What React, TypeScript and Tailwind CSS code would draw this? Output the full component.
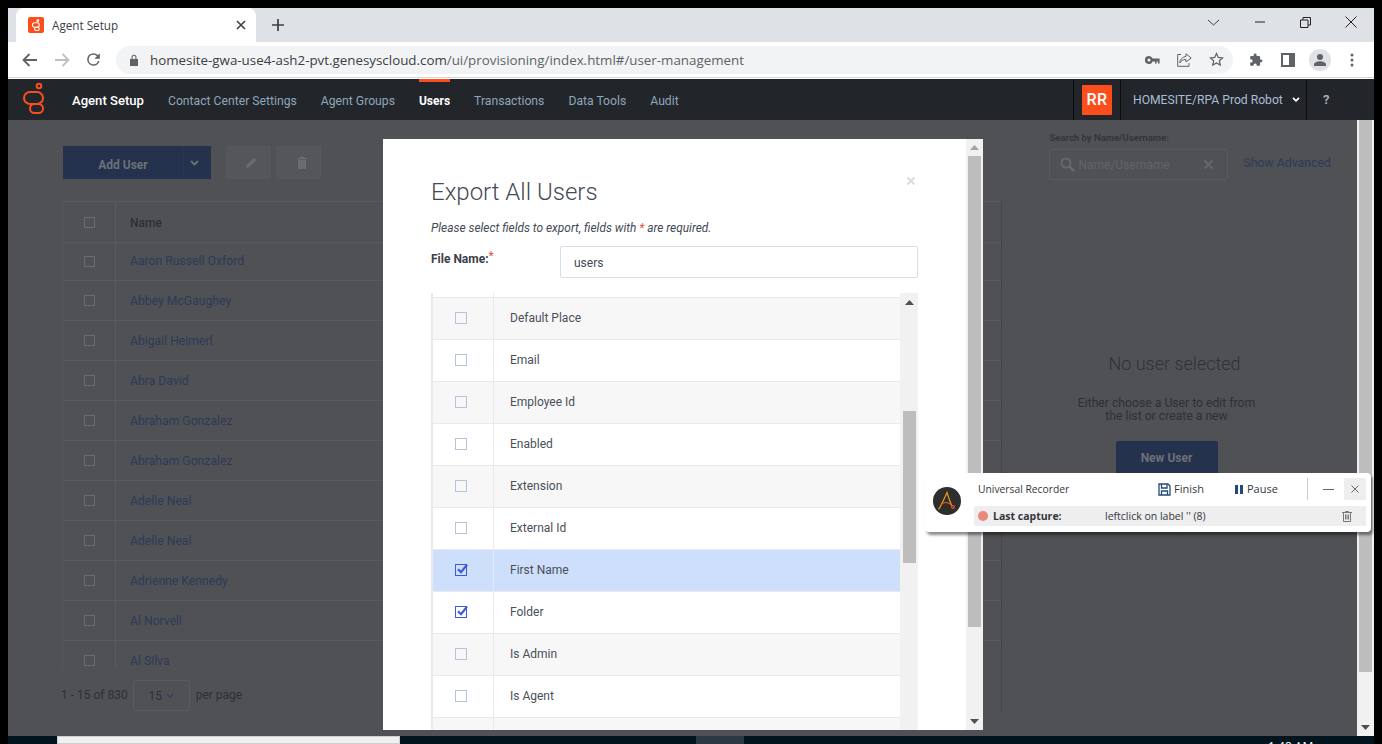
import React from "react";

const names = ["Aaron Russell Oxford","Abbey McGaughey","Abigail Heimerl","Abra David","Abraham Gonzalez","Abraham Gonzalez","Adelle Neal","Adelle Neal","Adrienne Kennedy","Al Norvell","Al Silva"];
const fields: { label: string; on?: boolean; bg: string }[] = [
  { label: "Default Place", bg: "bg-[#f7f7f7]" },
  { label: "Email", bg: "bg-white" },
  { label: "Employee Id", bg: "bg-[#f7f7f7]" },
  { label: "Enabled", bg: "bg-white" },
  { label: "Extension", bg: "bg-[#f7f7f7]" },
  { label: "External Id", bg: "bg-white" },
  { label: "First Name", on: true, bg: "bg-[#cddffb]" },
  { label: "Folder", on: true, bg: "bg-white" },
  { label: "Is Admin", bg: "bg-[#f7f7f7]" },
  { label: "Is Agent", bg: "bg-white" },
  { label: "", bg: "bg-[#f7f7f7]" },
];

const Tri = ({ up, color = "#505050" }: { up?: boolean; color?: string }) => (
  <svg width="9" height="5" viewBox="0 0 9 5"><path d={up ? "M4.5 0L9 5H0Z" : "M0 0H9L4.5 5Z"} fill={color} /></svg>
);

function Logo() {
  return (
    <svg width="22" height="32" viewBox="0 0 22 32" fill="none" stroke="#fc4e1c" strokeWidth="2" className="-mt-[3px]">
      <circle cx="16" cy="4" r="2.3" />
      <rect x="1" y="10" width="19" height="12" rx="6" />
      <rect x="7" y="22" width="13" height="9" rx="4.5" />
    </svg>
  );
}

function TabBar() {
  return (
    <div className="flex h-[34px] shrink-0 items-end bg-[#dee1e6]">
      <div className="ml-2 flex h-[34px] w-[240px] items-center rounded-t-lg bg-white pl-3 pr-[10px]">
        <span className="flex h-4 w-4 items-center justify-center rounded-[2px] bg-[#fc4e1c]">
          <svg width="8" height="12" viewBox="0 0 22 32" fill="none" stroke="#fff" strokeWidth="3">
            <circle cx="16" cy="4" r="2.5" /><rect x="1" y="10" width="19" height="12" rx="6" /><rect x="7" y="22" width="13" height="9" rx="4.5" />
          </svg>
        </span>
        <span className="ml-2 flex-1 pt-px font-['Open_Sans',sans-serif] text-[11.7px] text-[#3c4043]">Agent Setup</span>
        <svg width="10" height="10" viewBox="0 0 10 10" stroke="#3c4043" strokeWidth="1.6"><path d="M1 1L9 9M9 1L1 9" /></svg>
      </div>
      <div className="ml-[15px] flex h-[34px] items-center">
        <svg width="14" height="14" viewBox="0 0 14 14" stroke="#3c4043" strokeWidth="1.7"><path d="M7 1V13M1 7H13" /></svg>
      </div>
      <div className="ml-auto flex h-[34px] items-center gap-[33px] pb-[6px] pr-[17px]">
        <svg width="13" height="7" viewBox="0 0 13 7" fill="none" stroke="#3c4043"><path d="M1 1L6.5 6L12 1" /></svg>
        <svg width="10" height="2" viewBox="0 0 10 2" stroke="#222" className="ml-[2px]"><path d="M0 1H10" /></svg>
        <svg width="11" height="11" viewBox="0 0 11 11" fill="none" stroke="#222" className="ml-[2px]"><path d="M.5 3H8V10.5H.5ZM3 3V.5H10.5V8H8" /></svg>
        <svg width="12" height="12" viewBox="0 0 12 12" stroke="#222" className="ml-[1px]"><path d="M.5.5L11.5 11.5M11.5.5L.5 11.5" /></svg>
      </div>
    </div>
  );
}

function ToolBar() {
  return (
    <div className="flex h-[36px] shrink-0 items-center border-b border-[#d6d6d6] bg-white">
      <div className="ml-[14px] flex w-[94px] items-center gap-[14px]">
        <svg width="16" height="14" viewBox="0 0 16 14" fill="none" stroke="#5f6368" strokeWidth="1.8"><path d="M15 7H2M7.5 1L1.5 7L7.5 13" /></svg>
        <svg width="16" height="14" viewBox="0 0 16 14" fill="none" stroke="#bdc1c6" strokeWidth="1.8" className="ml-[2px]"><path d="M1 7H14M8.5 1L14.5 7L8.5 13" /></svg>
        <svg width="19" height="19" viewBox="0 0 24 24" fill="#5f6368"><path d="M17.65 6.35A7.96 7.96 0 0 0 12 4a8 8 0 1 0 7.73 10h-2.08A6 6 0 1 1 12 6c1.66 0 3.14.69 4.22 1.78L13 11h7V4l-2.35 2.35z" /></svg>
      </div>
      <div className="flex h-[28px] w-[1117px] items-center rounded-full bg-[#f1f3f4]">
        <svg width="10" height="12" viewBox="0 0 10 12" fill="#5f6368" className="ml-[13px]"><path d="M1 5H9V12H1ZM2.5 5V3.2a2.5 2.5 0 0 1 5 0V5H6.4V3.2a1.4 1.4 0 0 0-2.8 0V5Z" /></svg>
        <span className="ml-[11px] flex-1 pt-px font-['Open_Sans',sans-serif] text-[13.35px] text-[#3c4043]">
          homesite-gwa-use4-ash2-pvt.genesyscloud.com<span className="text-[#5f6368]">/ui/provisioning/index.html#/user-management</span>
        </span>
        <div className="mr-[9px] flex items-center gap-[17px]">
          <svg width="15" height="8" viewBox="0 0 15 8" fill="#5f6368"><path d="M4 0a4 4 0 1 0 3.6 5.6H10V7.6h1.6V5.6H13V7.6h1.6V2.6H7.6A4 4 0 0 0 4 0Zm0 2.4a1.6 1.6 0 1 1 0 3.2 1.6 1.6 0 0 1 0-3.2Z" /></svg>
          <svg width="15" height="14" viewBox="0 0 15 14" fill="none" stroke="#5f6368"><path d="M9 .8L14.2 5L9 9V6.5C6 6.5 4 7.5 2.8 10C3 6.5 5 4 9 3.4ZM4 1.5H.7V13.3H12V10" /></svg>
          <svg width="15" height="15" viewBox="0 0 24 24" fill="none" stroke="#5f6368" strokeWidth="2"><path d="M12 2.5l2.9 6.2 6.7.8-5 4.6 1.4 6.7-6-3.4-6 3.4 1.4-6.7-5-4.6 6.7-.8z" /></svg>
        </div>
      </div>
      <div className="ml-[16px] flex items-center">
        <svg width="14" height="14" viewBox="0 0 24 24" fill="#5f6368"><path d="M20.5 11H19V7a2 2 0 0 0-2-2h-4V3.5a2.5 2.5 0 0 0-5 0V5H4a2 2 0 0 0-2 2v3.8h1.5a2.7 2.7 0 0 1 0 5.4H2V20a2 2 0 0 0 2 2h3.8v-1.5a2.7 2.7 0 0 1 5.4 0V22H17a2 2 0 0 0 2-2v-4h1.5a2.5 2.5 0 0 0 0-5z" /></svg>
        <svg width="14" height="14" viewBox="0 0 14 14" className="ml-[18px]" fill="none"><rect x="1" y="1" width="12" height="12" stroke="#5f6368" strokeWidth="2" /><rect x="8" y="1" width="5" height="12" fill="#5f6368" /></svg>
        <span className="ml-[14px] flex h-[22px] w-[22px] items-center justify-center rounded-full bg-[#dfe1e5]">
          <svg width="12" height="12" viewBox="0 0 12 12" fill="#5f6368"><circle cx="6" cy="3" r="3" /><path d="M0 12V10.5C0 8.5 3 7.2 6 7.2S12 8.5 12 10.5V12Z" /></svg>
        </span>
        <svg width="4" height="14" viewBox="0 0 4 14" fill="#5f6368" className="ml-[19px]"><circle cx="2" cy="2" r="1.5" /><circle cx="2" cy="7" r="1.5" /><circle cx="2" cy="12" r="1.5" /></svg>
      </div>
    </div>
  );
}

function NavBar() {
  const cls = "pt-[3px] text-[12.2px] text-[#8fa5ba]";
  return (
    <div className="flex h-[41px] shrink-0 items-center bg-[#22252a] font-[Roboto,sans-serif]">
      <div className="ml-[15px] w-[49px]"><Logo /></div>
      <span className="pt-[2px] text-[13.1px] font-medium text-white">Agent Setup</span>
      <span className={`ml-[24px] ${cls}`}>Contact Center Settings</span>
      <span className={`ml-[24px] ${cls}`}>Agent Groups</span>
      <span className="relative ml-[24px] flex h-[41px] items-center border-t-[3px] border-[#fc4e1c] pb-px text-[12px] font-bold text-white">Users</span>
      <span className={`ml-[24px] ${cls}`}>Transactions</span>
      <span className={`ml-[24px] ${cls}`}>Data Tools</span>
      <span className={`ml-[24px] ${cls}`}>Audit</span>
      <div className="ml-auto flex h-[40px] items-center">
        <div className="flex h-full w-[48px] items-center justify-center border-x border-[#0c0d0f]">
          <span className="flex h-[30px] w-[30px] items-center justify-center rounded-[1px] bg-[#fc4e1c] pt-px text-[16px] font-medium tracking-[0.5px] text-white">RR</span>
        </div>
        <div className="flex h-full w-[186px] items-center border-r border-[#0c0d0f] pl-[12px]">
          <span className="pt-[2px] text-[12.15px] text-[#a8bed4]">HOMESITE/RPA Prod Robot</span>
          <svg width="8" height="5" viewBox="0 0 8 5" fill="none" stroke="#fff" strokeWidth="1.8" className="ml-[9px]"><path d="M1 .8L4 3.8L7 .8" /></svg>
        </div>
        <span className="w-[48px] pl-[16px] pt-px text-[13px] font-bold text-[#a9acb1]">?</span>
        <span className="w-[19px]" />
      </div>
    </div>
  );
}

function Box({ className = "" }: { className?: string }) {
  return <span className={`block h-[11px] w-[11px] border border-[#6b6c70] ${className}`} />;
}

function Page() {
  return (
    <div className="flex min-w-0 flex-1 flex-col bg-[#505155] font-[Roboto,sans-serif]">
      <div className="flex h-[81px] shrink-0 pl-[55px]">
        <div className="mt-[26px] flex h-[33px] items-start">
          <div className="flex h-[33px] w-[148px] items-center bg-[#24324e] text-[12px] font-bold text-[#6d7077]">
            <span className="w-[120px] pt-[4px] text-center">Add User</span>
            <span className="flex h-full flex-1 items-center justify-center border-l border-[#283655] pr-[7px]">
              <svg width="9" height="6" viewBox="0 0 9 6" fill="none" stroke="#6d7077" strokeWidth="1.8"><path d="M1 1L4.5 4.5L8 1" /></svg>
            </span>
          </div>
          <span className="ml-[15px] flex h-[33px] w-[45px] items-center justify-center rounded-[2px] border border-[#56585b] bg-[#54565a] pl-[6px]">
            <svg width="11" height="11" viewBox="0 0 11 11" fill="#6a6c70"><path d="M0 11L.7 8L7.8 .9L10.1 3.2L3 10.3Z" /></svg>
          </span>
          <span className="ml-[5px] flex h-[33px] w-[45px] items-center justify-center rounded-[2px] border border-[#56585b] bg-[#54565a] pl-[6px]">
            <svg width="10" height="13" viewBox="0 0 10 13" fill="#6a6c70"><path d="M0 2H3.2V.5H6.8V2H10V3.2H0ZM1 4H9V13H1Z" /></svg>
          </span>
        </div>
        <div className="ml-auto mr-[26px] mt-[12px] flex items-start">
          <div>
            <div className="text-[9.5px] font-bold leading-[12px] text-[#33363b]">Search by Name/Username:</div>
            <div className="mt-[5px] flex h-[31px] w-[179px] items-center rounded-[2px] border border-[#5a5b5f] pl-[10px]">
              <svg width="15" height="15" viewBox="0 0 15 15" fill="none" stroke="#65676b" strokeWidth="2"><circle cx="6" cy="6" r="4.5" /><path d="M9.5 9.5L14 14" strokeWidth="2.6" /></svg>
              <span className="ml-[3px] flex-1 text-[12px] text-[#62646a]">Name/Username</span>
              <svg width="9" height="9" viewBox="0 0 9 9" stroke="#65676b" strokeWidth="2" className="mr-[14px]"><path d="M.5.5L8.5 8.5M8.5.5L.5 8.5" /></svg>
            </div>
          </div>
          <span className="ml-[15px] mt-[22px] text-[12.3px] text-[#2e3a58]">Show Advanced</span>
        </div>
      </div>
      <div className="flex flex-1 pl-[54px]">
        <div className="w-[939px] shrink-0">
          <div className="h-[467px] overflow-hidden border-l border-[#56575b]">
            <div className="flex h-[42px] items-center border-y border-[#5a5b5f]">
              <span className="flex w-[52px] justify-center border-[#5a5b5f]"><Box /></span>
              <span className="flex h-full flex-1 items-center border-l border-[#5a5b5f] pl-[14px] pt-[2px] text-[12px] font-medium text-[#2e3034]">
                Name
                <span className="ml-[229px] flex flex-col gap-[1px]"><svg width="6" height="10" viewBox="0 0 6 10" fill="#35373b"><path d="M3 0L6 4H0ZM3 10L0 6H6Z" /></svg></span>
              </span>
            </div>
            {names.map((n, i) => (
              <div key={i} className={`flex items-center border-b border-[#5a5b5f] ${i === 0 ? "h-[38px]" : "h-[40px]"}`}>
                <span className="flex w-[52px] justify-center"><Box /></span>
                <span className={`flex h-full flex-1 items-center border-l border-[#5a5b5f] pl-[14px] text-[12.2px] text-[#2e3a58] ${i === 0 ? "" : "pt-[2px]"}`}>{n}</span>
              </div>
            ))}
          </div>
          <div className="mt-[12px] flex items-center text-[12px] text-[#2e3034]">
            <span className="-ml-[1px] -mt-[2px]">1 - 15 of 830</span>
            <span className="ml-[5px] flex h-[31px] w-[57px] items-center justify-center rounded-[2px] border border-[#5a5b5f] text-[#2f3034]">
              15
              <svg width="8" height="5" viewBox="0 0 8 5" fill="none" stroke="#33405f" strokeWidth="1.3" className="ml-[4px]"><path d="M.7.7L4 4L7.3.7" /></svg>
            </span>
            <span className="-mt-[2px] ml-[6px]">per page</span>
          </div>
        </div>
        <div className="flex h-[510px] flex-1 flex-col items-center border-l border-[#45464a] pr-[10px] pt-[151px]">
          <div className="text-[18px] font-light leading-[24px] text-[#2f3136]">No user selected</div>
          <div className="mr-[16px] mt-[21px] text-center text-[12.2px] leading-[13px] text-[#2e3034]">Either choose a User to edit from<br />the list or create a new</div>
          <div className="mr-[16px] mt-[18px] flex h-[33px] w-[102px] items-center justify-center rounded-[2px] bg-[#24324e] text-[12px] font-bold text-[#6d7077]">New User</div>
        </div>
      </div>
    </div>
  );
}

function Modal() {
  return (
    <div className="absolute left-[375px] top-[19px] flex h-[591px] w-[600px] overflow-hidden bg-white font-[Roboto,sans-serif]">
      <div className="relative flex min-w-0 flex-1 flex-col px-[48px] pt-[37px]">
        <svg width="8" height="8" viewBox="0 0 8 8" stroke="#dcdcdc" strokeWidth="2" className="absolute right-[51px] top-[38px]"><path d="M.5.5L7.5 7.5M7.5.5L.5 7.5" /></svg>
        <h2 className="text-[24px] font-light leading-[32px] text-[#444a55]">Export All Users</h2>
        <p className="mt-[12px] text-[11.9px] italic leading-[16px] text-[#444a55]">Please select fields to export, fields with <span className="text-[#e2513f]">*</span> are required.</p>
        <div className="mt-[10px] flex items-start">
          <label className="w-[129px] pt-[5px] text-[12px] font-bold leading-[16px] text-[#3c4048]">File Name:<span className="relative -top-[3px] font-normal text-[#e2513f]">*</span></label>
          <div className="flex h-[32px] flex-1 items-center rounded-[2px] border border-[#d8dfea] pl-[13px] pt-px text-[12px] text-[#444a55]">users</div>
        </div>
        <div className="mt-[15px] flex min-h-0 flex-1">
          <div className="min-w-0 flex-1 overflow-hidden border-l-2 border-[#e8eaf0]">
            <div className="ml-[60px] h-[4px] border-l border-[#e8eaf0]" />
            {fields.map((f, i) => (
              <div key={i} className={`flex h-[42px] items-center border-t border-[#e8eaf0] ${f.bg}`}>
                <span className="flex w-[60px] justify-center pb-[2px] pr-[4px]">
                  {f.on ? (
                    <svg width="13" height="13" viewBox="0 0 13 13" fill="none">
                      <rect x=".5" y="1.5" width="11" height="11" stroke="#3d5bd6" />
                      <path d="M3 6.2L6 9.2L12 1.8" stroke="#3d5bd6" strokeWidth="2.2" />
                    </svg>
                  ) : (
                    <span className="block h-[12px] w-[12px] border border-[#b5c4d8]" />
                  )}
                </span>
                <span className={`flex h-full flex-1 items-center border-l pb-[2px] pl-[16px] text-[12px] text-[#4a4f58] ${f.on && i === 6 ? "border-[#e0eafb]" : "border-[#e8eaf0]"}`}>{f.label}</span>
              </div>
            ))}
          </div>
          <div className="flex w-[18px] shrink-0 flex-col items-center bg-[#f1f1f1]">
            <div className="flex h-[18px] shrink-0 items-center justify-center"><Tri up /></div>
            <div className="mt-[100px] h-[152px] w-[13px] bg-[#bdbdbd]" />
          </div>
        </div>
      </div>
      <div className="flex w-[17px] shrink-0 flex-col items-center bg-[#f1f1f1]">
        <div className="flex h-[17px] shrink-0 items-center justify-center"><Tri up color="#a3a3a3" /></div>
        <div className="h-[471px] w-[13px] bg-[#bdbdbd]" />
        <div className="mt-auto flex h-[17px] items-center justify-center"><Tri color="#505050" /></div>
      </div>
    </div>
  );
}

function Recorder() {
  return (
    <div className="absolute left-[917px] top-[353px] flex h-[59px] w-[446px] rounded-[4px] bg-white pl-[8px] pr-[5px] pt-[5px] font-['Open_Sans',sans-serif] shadow-[2px_3px_3px_rgba(0,0,0,0.45)]">
      <div className="mt-[9px] flex h-[28px] w-[28px] shrink-0 items-center justify-center rounded-full bg-[#2e2e2e]">
        <svg width="20" height="20" viewBox="0 0 20 20" fill="none" strokeWidth="1.1">
          <path d="M1.5 18.5C5 13 8 6 10 1.5C11.5 6 13 11 15 15" stroke="#f5a21d" />
          <path d="M4 13.5C8 10.5 12 10.8 15 15" stroke="#ea5a24" />
          <circle cx="16" cy="16" r="1.4" stroke="#ea5a24" />
        </svg>
      </div>
      <div className="ml-[13px] flex min-w-0 flex-1 flex-col">
        <div className="flex h-[22px] shrink-0 items-center whitespace-nowrap pl-[4px]">
          <span className="w-[91px] shrink-0 pt-px text-[10.3px] text-[#33373d]">Universal Recorder</span>
          <span className="ml-[89px] flex w-[46px] shrink-0 items-center text-[11px] text-[#33373d]">
            <svg width="13" height="13" viewBox="0 0 13 13" fill="none" stroke="#234a78" strokeWidth="1.3" className="shrink-0"><path d="M1 1H10L12 3V12H1ZM3.5 1V5H9V1M3.5 12V8H9.5V12" /></svg>
            <span className="ml-[3px] pt-px">Finish</span>
          </span>
          <span className="ml-[31px] flex w-[43px] shrink-0 items-center text-[11px] text-[#33373d]">
            <svg width="8" height="9" viewBox="0 0 8 9" fill="#234a78" className="shrink-0"><path d="M0 0H3V9H0ZM5 0H8V9H5Z" /></svg>
            <span className="ml-[4px] pt-px">Pause</span>
          </span>
          <span className="ml-[29px] h-[22px] shrink-0 border-l border-[#ccc]" />
          <svg width="11" height="1" viewBox="0 0 11 1" stroke="#666" className="ml-[15px] shrink-0"><path d="M0 .5H11" /></svg>
          <span className="ml-[10px] flex h-[22px] w-[22px] shrink-0 items-center justify-center rounded-[2px] bg-[#eeeeee]">
            <svg width="8" height="8" viewBox="0 0 8 8" stroke="#666"><path d="M.5.5L7.5 7.5M7.5.5L.5 7.5" /></svg>
          </span>
        </div>
        <div className="mt-[6px] flex h-[20px] shrink-0 items-center bg-[#eeeeee] pl-[4px] text-[10.5px] text-[#33373d]">
          <span className="h-[10px] w-[10px] rounded-full bg-[#e8897a]" />
          <span className="ml-[5px] w-[112px] pt-px font-bold">Last capture:</span>
          <span className="pt-px">leftclick on label '' (8)</span>
          <svg width="10" height="11" viewBox="0 0 10 11" fill="none" stroke="#777" className="ml-auto mr-[14px]"><path d="M0 1.5H10M3.5 1.5V.5H6.5V1.5M1.5 1.5V10.5H8.5V1.5M3.5 3.5V8.5M5 3.5V8.5M6.5 3.5V8.5" /></svg>
        </div>
      </div>
    </div>
  );
}

export default function App() {
  return (
    <div className="flex h-[744px] w-full flex-col overflow-hidden bg-black px-2 pt-2">
      <TabBar />
      <ToolBar />
      <div className="h-px shrink-0 bg-white" />
      <NavBar />
      <div className="relative flex h-[616px] shrink-0">
        <Page />
        <div className="flex w-[17px] shrink-0 flex-col items-center bg-[#f1f1f1]">
          <div className="h-[552px] w-[13px] bg-[#bdbdbd]" />
          <div className="mt-auto flex h-[17px] items-center justify-center"><Tri /></div>
        </div>
        <Modal />
        <Recorder />
      </div>
      <div className="relative flex h-[8px] shrink-0 overflow-hidden bg-[#02151f]">
        <div className="ml-[49px] h-full w-[343px] border border-[#cfcfcf] bg-[#f0f0f0]" />
        <div className="ml-[296px] h-full w-[48px] bg-[#2b3a42]" />
        <span className="ml-[524px] mt-[4px] font-['Open_Sans',sans-serif] text-[12px] leading-[14px] text-white">1:48 AM</span>
      </div>
    </div>
  );
}
